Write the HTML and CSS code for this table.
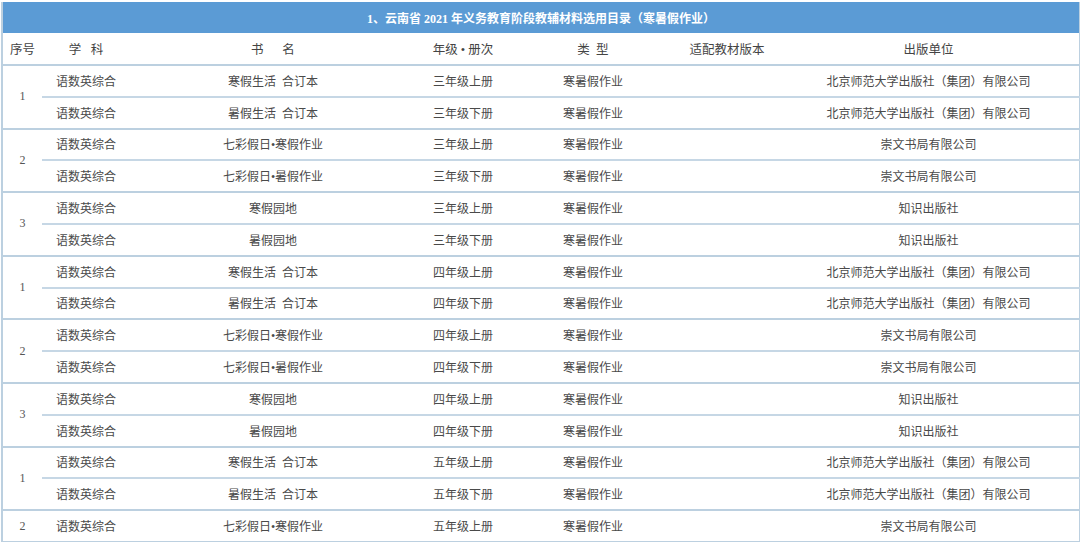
FILE: index.html
```html
<!DOCTYPE html>
<html lang="zh">
<head>
<meta charset="utf-8">
<link rel="stylesheet" href="styles.css">
</head>
<body>
<table class="list">
  <colgroup>
    <col class="c-no"><col class="c-subj"><col class="c-book"><col class="c-grade"><col class="c-type"><col class="c-ver"><col class="c-pub">
  </colgroup>
  <thead>
    <tr class="title"><th colspan="7">1、云南省 2021 年义务教育阶段教辅材料选用目录（寒暑假作业）</th></tr>
    <tr class="head">
      <th>序号</th><th>学&ensp;&nbsp;科</th><th>书&emsp;&ensp;名</th><th>年级 • 册次</th><th>类&nbsp;&nbsp;型</th><th>适配教材版本</th><th>出版单位</th>
    </tr>
  </thead>
  <tbody>
    <tr class="g"><td class="no" rowspan="2">1</td><td>语数英综合</td><td>寒假生活&nbsp;&nbsp;合订本</td><td>三年级上册</td><td>寒暑假作业</td><td></td><td>北京师范大学出版社（集团）有限公司</td></tr>
    <tr class="in"><td>语数英综合</td><td>暑假生活&nbsp;&nbsp;合订本</td><td>三年级下册</td><td>寒暑假作业</td><td></td><td>北京师范大学出版社（集团）有限公司</td></tr>
    <tr class="g"><td class="no" rowspan="2">2</td><td>语数英综合</td><td>七彩假日•寒假作业</td><td>三年级上册</td><td>寒暑假作业</td><td></td><td>崇文书局有限公司</td></tr>
    <tr class="in"><td>语数英综合</td><td>七彩假日•暑假作业</td><td>三年级下册</td><td>寒暑假作业</td><td></td><td>崇文书局有限公司</td></tr>
    <tr class="g"><td class="no" rowspan="2">3</td><td>语数英综合</td><td>寒假园地</td><td>三年级上册</td><td>寒暑假作业</td><td></td><td>知识出版社</td></tr>
    <tr class="in"><td>语数英综合</td><td>暑假园地</td><td>三年级下册</td><td>寒暑假作业</td><td></td><td>知识出版社</td></tr>
    <tr class="g"><td class="no" rowspan="2">1</td><td>语数英综合</td><td>寒假生活&nbsp;&nbsp;合订本</td><td>四年级上册</td><td>寒暑假作业</td><td></td><td>北京师范大学出版社（集团）有限公司</td></tr>
    <tr class="in"><td>语数英综合</td><td>暑假生活&nbsp;&nbsp;合订本</td><td>四年级下册</td><td>寒暑假作业</td><td></td><td>北京师范大学出版社（集团）有限公司</td></tr>
    <tr class="g"><td class="no" rowspan="2">2</td><td>语数英综合</td><td>七彩假日•寒假作业</td><td>四年级上册</td><td>寒暑假作业</td><td></td><td>崇文书局有限公司</td></tr>
    <tr class="in"><td>语数英综合</td><td>七彩假日•暑假作业</td><td>四年级下册</td><td>寒暑假作业</td><td></td><td>崇文书局有限公司</td></tr>
    <tr class="g"><td class="no" rowspan="2">3</td><td>语数英综合</td><td>寒假园地</td><td>四年级上册</td><td>寒暑假作业</td><td></td><td>知识出版社</td></tr>
    <tr class="in"><td>语数英综合</td><td>暑假园地</td><td>四年级下册</td><td>寒暑假作业</td><td></td><td>知识出版社</td></tr>
    <tr class="g"><td class="no" rowspan="2">1</td><td>语数英综合</td><td>寒假生活&nbsp;&nbsp;合订本</td><td>五年级上册</td><td>寒暑假作业</td><td></td><td>北京师范大学出版社（集团）有限公司</td></tr>
    <tr class="in"><td>语数英综合</td><td>暑假生活&nbsp;&nbsp;合订本</td><td>五年级下册</td><td>寒暑假作业</td><td></td><td>北京师范大学出版社（集团）有限公司</td></tr>
    <tr class="g"><td class="no">2</td><td>语数英综合</td><td>七彩假日•寒假作业</td><td>五年级上册</td><td>寒暑假作业</td><td></td><td>崇文书局有限公司</td></tr>
  </tbody>
</table>
</body>
</html>
```

FILE: styles.css
```css
html, body {
  margin: 0;
  padding: 0;
  background: #ffffff;
}
body {
  padding: 2px 1px 0 1px;
  font-family: "Liberation Serif", "Noto Sans CJK SC", serif;
  font-size: 12px;
  color: #4a4a4a;
}
.list {
  width: 1078px;
  border-collapse: collapse;
  table-layout: fixed;
  border-left: 2px solid #bcd0e0;
  border-right: 2px solid #bcd0e0;
  border-bottom: 2px solid #bcd0e0;
}
.c-no { width: 40px; }
.c-subj { width: 88px; }
.c-book { width: 286px; }
.c-grade { width: 94px; }
.c-type { width: 166px; }
.c-ver { width: 102px; }
.c-pub { width: 302px; }

.title th {
  background: #5b9bd5;
  color: #ffffff;
  font-weight: bold;
  font-size: 12px;
  height: 31px;
  padding: 0;
  text-align: center;
  border: none;
}
.head th {
  height: 31px;
  padding: 0;
  font-weight: normal;
  color: #444444;
  text-align: center;
  font-size: 12.5px;
  border-bottom: 2px solid #bcd0e0;
}
td {
  height: 29.8px;
  padding: 0;
  text-align: center;
  white-space: nowrap;
}
tr.g td {
  border-top: 2px solid #bcd0e0;
}
tr.in td {
  border-top: 2px solid #c6d7e5;
}
tbody tr:first-child td {
  border-top: none;
}
td.no {
  color: #555555;
}
```
